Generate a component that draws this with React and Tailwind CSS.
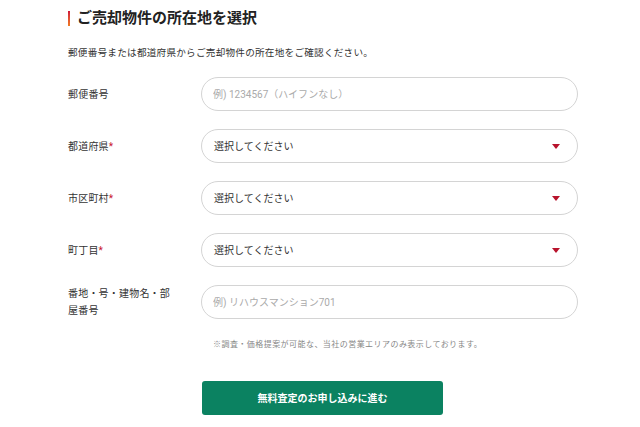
import React from 'react';

const font = { fontFamily: "Roboto, 'Noto Sans CJK JP', sans-serif" };

const Arrow = () => (
  <svg width="8" height="5" viewBox="0 0 8 5" className="shrink-0">
    <path d="M0 0 H8 L4 5 Z" fill="#b8132c" />
  </svg>
);

const Row = ({ label, required, children }) => (
  <div className="flex items-center">
    <div className="w-[133px] shrink-0">
      <div className="w-[106px] text-[10px] leading-[17px] text-[#333] tracking-[0.2px]">
        {label}
        {required && <span className="text-[#c8102e]">*</span>}
      </div>
    </div>
    {children}
  </div>
);

const TextInput = ({ placeholder }) => (
  <input
    type="text"
    placeholder={placeholder}
    className="w-[377px] h-[34px] rounded-[17px] border border-[#d4d4d4] bg-white px-[11px] text-[10px] text-[#333] placeholder:text-[#aaa] outline-none"
  />
);

const SelectBox = () => (
  <div className="w-[377px] h-[34px] rounded-[17px] border border-[#d4d4d4] bg-white flex items-center justify-between pl-[12px] pr-[17px] text-[10px] text-[#333]">
    <span>選択してください</span>
    <Arrow />
  </div>
);

const App = () => {
  return (
    <div className="min-h-screen w-full bg-white" style={font}>
      <div className="pl-[68px] pt-[10px]">
        <div className="flex items-center h-[17px]">
          <span className="w-[2px] h-[15px] bg-gradient-to-b from-[#d0103a] to-[#f07a20] mr-[7px]"></span>
          <h1 className="text-[15px] font-bold text-[#222] leading-none">ご売却物件の所在地を選択</h1>
        </div>
        <p className="mt-[19px] text-[9.6px] tracking-[0.25px] text-[#333] leading-[14px]">
          郵便番号または都道府県からご売却物件の所在地をご確認ください。
        </p>

        <div className="mt-[17px] flex flex-col gap-[18px]">
          <Row label="郵便番号">
            <TextInput placeholder="例) 1234567（ハイフンなし）" />
          </Row>
          <Row label="都道府県" required>
            <SelectBox />
          </Row>
          <Row label="市区町村" required>
            <SelectBox />
          </Row>
          <Row label="町丁目" required>
            <SelectBox />
          </Row>
          <Row label="番地・号・建物名・部屋番号">
            <TextInput placeholder="例) リハウスマンション701" />
          </Row>
        </div>

        <p className="mt-[20px] ml-[145px] text-[8px] tracking-[0.45px] text-[#888] leading-[12px]">
          ※調査・価格提案が可能な、当社の営業エリアのみ表示しております。
        </p>

        <button className="mt-[30px] ml-[134px] w-[241px] h-[34px] rounded-[3px] bg-[#0b8261] text-white text-[10px] font-bold">
          無料査定のお申し込みに進む
        </button>
      </div>
    </div>
  );
};

export default App;
